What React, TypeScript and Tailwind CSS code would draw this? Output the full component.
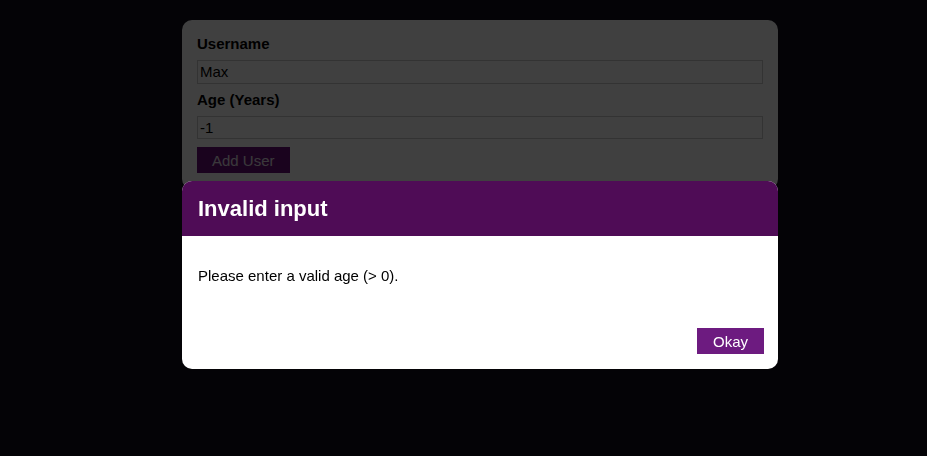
import { useState } from 'react';

export default function App() {
  const [username, setUsername] = useState('Max');
  const [age, setAge] = useState('-1');
  const [error, setError] = useState(true);

  return (
    <div
      className="min-h-screen w-full bg-[#100c18] pt-5"
      style={{ fontFamily: '"Liberation Sans", Arial, sans-serif' }}
    >
      {/* Add user form */}
      <div className="ml-[182px] w-[596px] rounded-[10px] bg-white px-[15px] py-4">
        <label className="mb-2 block text-[15px] font-bold leading-4 text-black">Username</label>
        <input
          value={username}
          onChange={(e) => setUsername(e.target.value)}
          className="mb-2 block h-[23.5px] w-full border border-[#cccccc] bg-white px-[2px] text-[15px] text-black outline-none"
        />
        <label className="mb-2 block text-[15px] font-bold leading-4 text-black">Age (Years)</label>
        <input
          value={age}
          onChange={(e) => setAge(e.target.value)}
          className="mb-2 block h-[23.5px] w-full border border-[#cccccc] bg-white px-[2px] text-[15px] text-black outline-none"
        />
        <button
          onClick={() => setError(true)}
          className="block h-[26px] border border-[#6a0c78] bg-[#6a0c78] px-[14px] text-[15px] leading-none text-[#e8e0ea]"
        >
          Add User
        </button>
      </div>

      {error && (
        <>
          {/* Backdrop */}
          <div className="fixed inset-0 bg-black/75" onClick={() => setError(false)}></div>

          {/* Error modal */}
          <div className="fixed left-[182px] top-[181px] w-[596px] overflow-hidden rounded-[10px] bg-white">
            <header className="bg-[#4f0c56] p-4">
              <h2 className="text-[22px] font-bold leading-[23px] text-white">Invalid input</h2>
            </header>
            <div className="p-4">
              <p className="my-[15px] text-[15px] leading-[17px] text-black">Please enter a valid age (&gt; 0).</p>
            </div>
            <footer className="flex justify-end pb-[15px] pl-4 pr-[14px] pt-[13px]">
              <button
                onClick={() => setError(false)}
                className="h-[26px] bg-[#6d1b80] px-4 text-[15px] leading-none text-white"
              >
                Okay
              </button>
            </footer>
          </div>
        </>
      )}
    </div>
  );
}
